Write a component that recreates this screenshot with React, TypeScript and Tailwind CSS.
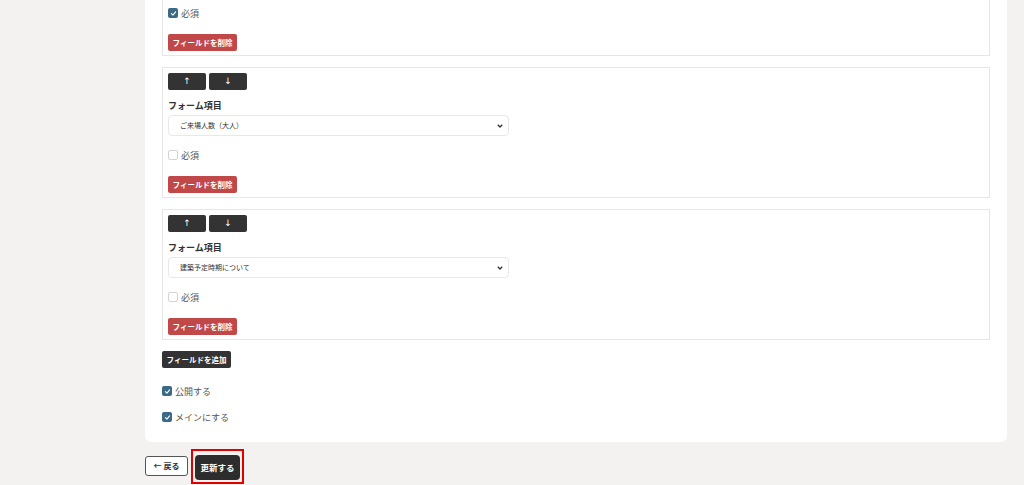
import React from 'react';

const font = { fontFamily: '"Noto Sans CJK JP", "Noto Sans", sans-serif' };

const Check: React.FC<{ checked?: boolean; label: string }> = ({ checked, label }) => (
  <label className="flex items-center gap-[3px] h-[12px]">
    {checked ? (
      <span className="w-[10px] h-[10px] rounded-[2px] bg-[#3b6a86] flex items-center justify-center">
        <svg width="7" height="7" viewBox="0 0 10 10" fill="none">
          <path d="M2 5.2 L4.2 7.3 L8 2.8" stroke="white" strokeWidth="1.6" strokeLinecap="round" strokeLinejoin="round" />
        </svg>
      </span>
    ) : (
      <span className="w-[10px] h-[10px] rounded-[2px] border border-[#d4d4d4] bg-white" />
    )}
    <span className="text-[9px] text-[#555] leading-none">{label}</span>
  </label>
);

const DeleteButton: React.FC<{ className?: string }> = ({ className }) => (
  <button className={`w-[69px] h-[17px] rounded-[2px] bg-[#c14848] text-white text-[7.5px] font-bold leading-none ${className ?? ''}`}>
    フィールドを削除
  </button>
);

const FieldBox: React.FC<{ option: string }> = ({ option }) => (
  <div className="border border-[#e6e6e6] px-[5px] pt-[5px] pb-[4px] h-[131px] flex flex-col">
    <div className="flex gap-[3px]">
      <button className="w-[38px] h-[17px] rounded-[2px] bg-[#333] text-white text-[9px] font-['DejaVu_Sans'] leading-none">↑</button>
      <button className="w-[38px] h-[17px] rounded-[2px] bg-[#333] text-white text-[9px] font-['DejaVu_Sans'] leading-none">↓</button>
    </div>
    <div className="mt-[10px] text-[9px] font-bold text-[#333] leading-[12px]">フォーム項目</div>
    <div className="mt-[3px] w-[341px] h-[21px] border border-[#e8e8e8] rounded-[4px] flex items-center justify-between pl-[11px] pr-[5px]">
      <span className="text-[7px] text-[#333]">{option}</span>
      <svg width="6" height="4" viewBox="0 0 6 4">
        <path d="M0.8 0.8 L3 3 L5.2 0.8" stroke="#333" strokeWidth="1.3" fill="none" />
      </svg>
    </div>
    <div className="mt-[13px]">
      <Check label="必須" />
    </div>
    <DeleteButton className="mt-[15px]" />
  </div>
);

const App: React.FC = () => {
  return (
    <div className="w-[1024px] h-[485px] overflow-hidden bg-[#f3f2f0]" style={font}>
      <div className="pl-[145px] pr-[17px]">
        <div className="bg-white rounded-b-[6px] px-[17px] pb-[19px]">
          <div className="flex flex-col gap-[11px]">
            {/* first field, scrolled partly out of view */}
            <div className="border border-t-0 border-[#e6e6e6] px-[5px] pt-[7px] pb-[4px] h-[56px] flex flex-col">
              <Check checked label="必須" />
              <DeleteButton className="mt-[15px]" />
            </div>
            <FieldBox option="ご来場人数（大人）" />
            <FieldBox option="建築予定時期について" />
          </div>
          <button className="mt-[11px] w-[69px] h-[17px] rounded-[2px] bg-[#333] text-white text-[7.5px] font-bold leading-none">
            フィールドを追加
          </button>
          <div className="mt-[17px] flex flex-col gap-[14px]">
            <Check checked label="公開する" />
            <Check checked label="メインにする" />
          </div>
        </div>
        <div className="mt-[7px] flex items-center gap-[3px]">
          <button className="w-[43px] h-[20px] rounded-[3px] border border-[#555] bg-white text-[8px] font-bold text-[#333] leading-none">
            ← 戻る
          </button>
          <div className="border-2 border-[#e00000] px-[2px] pt-[1px] pb-[2px]">
            <button className="w-[45px] h-[25px] rounded-[4px] bg-[#2d2d2d] text-white text-[8.5px] font-bold leading-none">
              更新する
            </button>
          </div>
        </div>
      </div>
    </div>
  );
};

export default App;
